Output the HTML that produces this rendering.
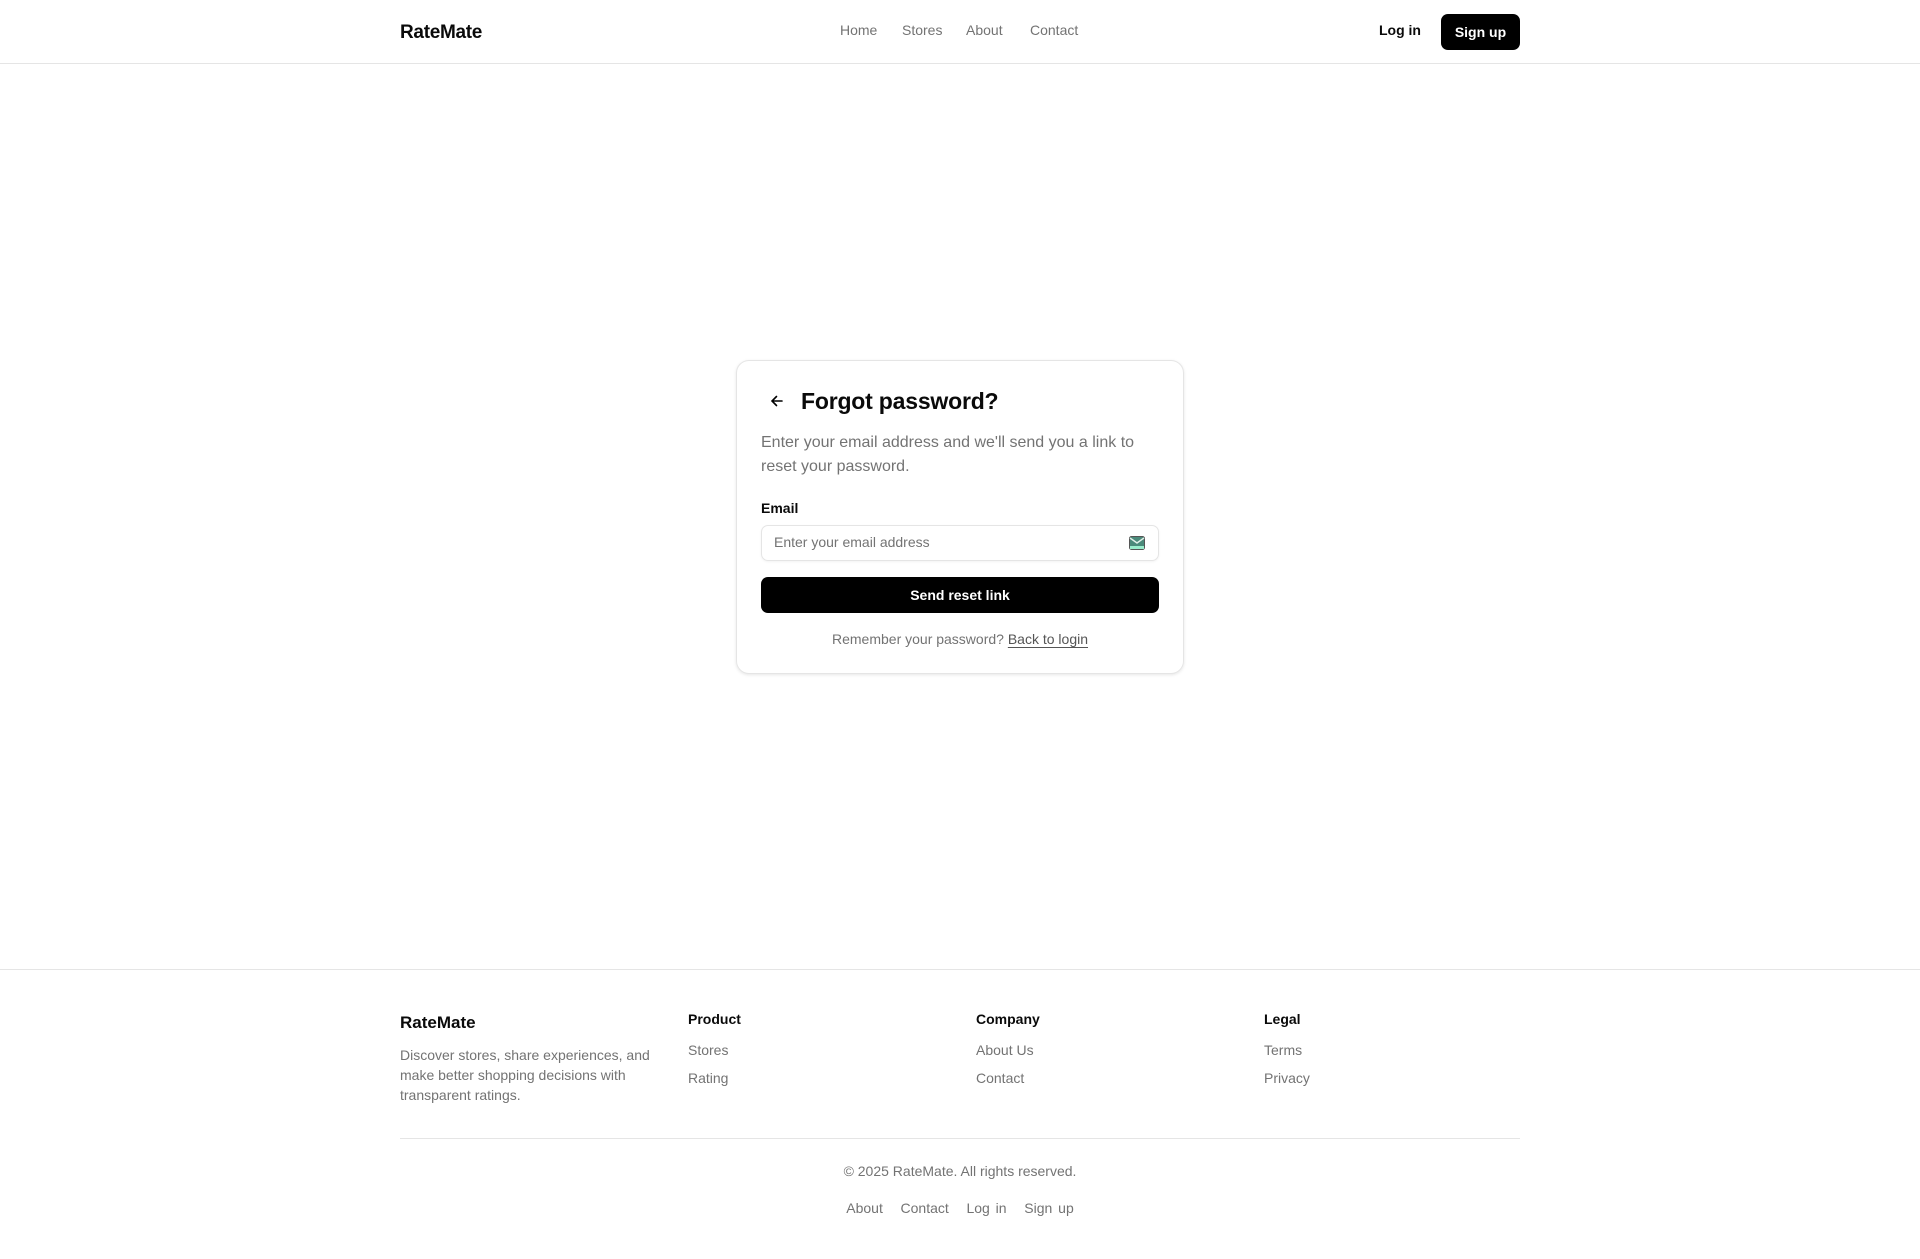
<!DOCTYPE html>
<html><head><meta charset="utf-8"><style>
*{box-sizing:border-box;margin:0;padding:0}
body{width:1920px;height:1259px;background:#fff;font-family:"Liberation Sans",sans-serif;color:#0a0a0a;position:relative;overflow:hidden}
.a{position:absolute;white-space:nowrap}
.g{color:#737373}
</style></head><body>
<div class="a" style="left:0;top:63px;width:1920px;height:1px;background:#e5e5e5"></div>
<div class="a" style="left:400px;top:22px;font-size:19px;font-weight:bold;letter-spacing:-0.3px">RateMate</div>
<div class="a g" style="left:840px;top:22px;font-size:14px">Home</div>
<div class="a g" style="left:902px;top:22px;font-size:14px">Stores</div>
<div class="a g" style="left:966px;top:22px;font-size:14px">About</div>
<div class="a g" style="left:1030px;top:22px;font-size:14px">Contact</div>
<div class="a" style="left:1379px;top:22px;font-size:14px;font-weight:bold">Log in</div>
<div class="a" style="left:1441px;top:14px;width:79px;height:36px;background:#000;border-radius:7px;color:#fff;font-size:14px;font-weight:bold;text-align:center;line-height:36px">Sign up</div>

<div class="a" style="left:736px;top:360px;width:448px;height:314px;border:1px solid #e5e5e5;border-radius:13px;box-shadow:0 1px 3px rgba(0,0,0,.1)"></div>
<svg class="a" style="left:769px;top:393px" width="16" height="16" viewBox="0 0 16 16"><path d="M13 8H3M7.5 3.5L3 8l4.5 4.5" fill="none" stroke="#000" stroke-width="1.6" stroke-linecap="round"/></svg>
<div class="a" style="left:801px;top:388px;font-size:23px;font-weight:bold;letter-spacing:-0.2px">Forgot password?</div>
<div class="a g" style="left:761px;top:431px;font-size:16px;line-height:24px;white-space:normal;width:400px">Enter your email address and we'll send you a link to reset your password.</div>
<div class="a" style="left:761px;top:500px;font-size:14px;font-weight:bold">Email</div>
<div class="a" style="left:761px;top:525px;width:398px;height:36px;border:1px solid #e5e5e5;border-radius:7px;box-shadow:0 1px 2px rgba(0,0,0,.05)"></div>
<div class="a g" style="left:774px;top:534px;font-size:14px">Enter your email address</div>
<svg class="a" style="left:1129px;top:536px" width="16" height="14" viewBox="0 0 16 14"><rect x="0.5" y="0.5" width="15" height="13" rx="2" fill="#4a8a7a" stroke="#555"/><path d="M1 2l7 5 7-5" fill="none" stroke="#e0f0e8" stroke-width="1.5"/><rect x="1" y="10" width="14" height="3" fill="#9ec"/></svg>
<div class="a" style="left:761px;top:577px;width:398px;height:36px;background:#000;border-radius:7px;color:#fff;font-size:14px;font-weight:bold;text-align:center;line-height:36px">Send reset link</div>
<div class="a g" style="left:761px;top:631px;width:398px;text-align:center;font-size:14px">Remember your password? <span style="color:#555;text-decoration:underline;text-underline-offset:3px">Back to login</span></div>

<div class="a" style="left:0;top:969px;width:1920px;height:1px;background:#e5e5e5"></div>
<div class="a" style="left:400px;top:1013px;font-size:17px;font-weight:bold">RateMate</div>
<div class="a g" style="left:400px;top:1045px;font-size:14px;line-height:20px;white-space:normal;width:260px">Discover stores, share experiences, and make better shopping decisions with transparent ratings.</div>
<div class="a" style="left:688px;top:1011px;font-size:14px;font-weight:bold">Product</div>
<div class="a g" style="left:688px;top:1042px;font-size:14px">Stores</div>
<div class="a g" style="left:688px;top:1070px;font-size:14px">Rating</div>
<div class="a" style="left:976px;top:1011px;font-size:14px;font-weight:bold">Company</div>
<div class="a g" style="left:976px;top:1042px;font-size:14px">About Us</div>
<div class="a g" style="left:976px;top:1070px;font-size:14px">Contact</div>
<div class="a" style="left:1264px;top:1011px;font-size:14px;font-weight:bold">Legal</div>
<div class="a g" style="left:1264px;top:1042px;font-size:14px">Terms</div>
<div class="a g" style="left:1264px;top:1070px;font-size:14px">Privacy</div>
<div class="a" style="left:400px;top:1138px;width:1120px;height:1px;background:#e5e5e5"></div>
<div class="a g" style="left:400px;top:1163px;width:1120px;text-align:center;font-size:14px">© 2025 RateMate. All rights reserved.</div>
<div class="a g" style="left:400px;top:1200px;width:1120px;text-align:center;font-size:14px;word-spacing:2px">About &nbsp;&nbsp;Contact &nbsp;&nbsp;Log in &nbsp;&nbsp;Sign up</div>
</body></html>
